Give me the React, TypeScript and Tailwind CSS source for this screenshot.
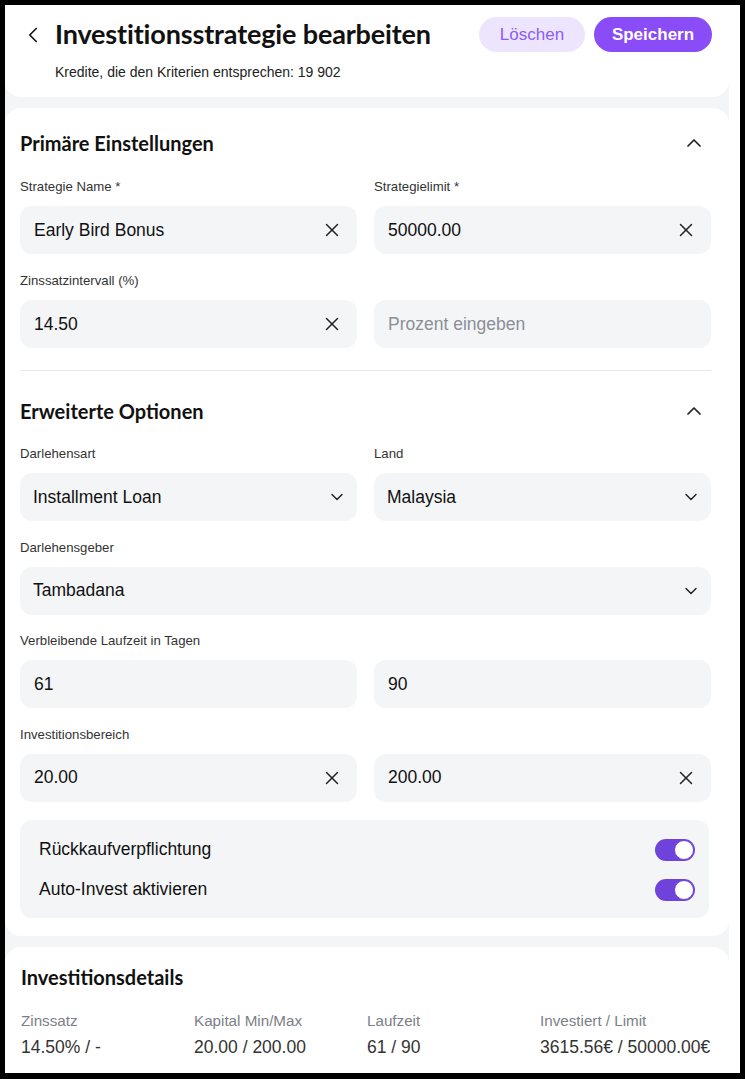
import { X, ChevronDown, ChevronUp, ChevronLeft } from "lucide-react";

const sans = "font-['Liberation_Sans',Arial,sans-serif]";
const heading = "font-['Lato','Noto_Sans',sans-serif]";

function Label({ text }: { text: string }) {
  return <div className="h-4 text-[13.2px] leading-4 text-[#333] mb-[11px]">{text}</div>;
}

function TextField({ value, placeholder, clear }: { value?: string; placeholder?: string; clear?: boolean }) {
  return (
    <div className="flex items-center h-12 rounded-xl bg-[#f4f5f7] pl-[14px] pr-[14px]">
      {value ? (
        <span className="flex-1 text-[17.5px] text-[#111]">{value}</span>
      ) : (
        <span className="flex-1 text-[17.5px] text-[#8a8f98]">{placeholder}</span>
      )}
      {clear && <X size={22} strokeWidth={1.6} className="text-[#222]" />}
    </div>
  );
}

function SelectField({ value }: { value: string }) {
  return (
    <div className="flex items-center h-12 rounded-xl bg-[#f4f5f7] pl-[13px] pr-[10px]">
      <span className="flex-1 text-[17.5px] text-[#111]">{value}</span>
      <ChevronDown size={20} strokeWidth={1.75} className="text-[#222]" />
    </div>
  );
}

function Field({ label, children }: { label?: string; children: React.ReactNode }) {
  return (
    <div>
      <Label text={label ?? ""} />
      {children}
    </div>
  );
}

function Toggle() {
  return (
    <div className="flex items-center justify-end w-10 h-[22px] rounded-full bg-[#6f42dc] p-px">
      <div className="w-5 h-5 rounded-full bg-white border border-[#6f42dc]" />
    </div>
  );
}

function SectionHeader({ title }: { title: string }) {
  return (
    <div className="flex items-center justify-between h-[26px]">
      <h2 className={`${heading} text-[20px] font-bold text-[#111]`}>{title}</h2>
      <ChevronUp size={24} strokeWidth={1.75} className="text-[#222] mr-[5px]" />
    </div>
  );
}

const details = [
  { label: "Zinssatz", value: "14.50% / -" },
  { label: "Kapital Min/Max", value: "20.00 / 200.00" },
  { label: "Laufzeit", value: "61 / 90" },
  { label: "Investiert / Limit", value: "3615.56€ / 50000.00€" },
];

export default function App() {
  return (
    <div className={`${sans} w-[745px] h-[1079px] bg-black pt-[5px] pl-[5px] pr-[5px] pb-[6px]`}>
      <div className="h-full bg-white overflow-hidden">
        <div className="w-[724px] h-full bg-[#f4f5f7] flex flex-col">
          {/* header */}
          <div className="bg-white rounded-b-2xl h-[92px] pl-[17px] pr-[17px] pt-3">
            <div className="flex items-center h-[35px]">
              <ChevronLeft size={26} strokeWidth={1.5} className="text-[#111] -ml-[2px]" />
              <h1 className={`${heading} ml-[9px] text-[27px] font-bold text-[#111] tracking-[-0.15px]`}>
                Investitionsstrategie bearbeiten
              </h1>
              <div className="ml-auto flex gap-[9px]">
                <button className="h-[35px] w-[106px] rounded-full bg-[#ede5fe] text-[17px] text-[#8b5cf6]">
                  Löschen
                </button>
                <button className="h-[35px] w-[118px] rounded-full bg-[#8a4cf7] text-[17px] text-white font-semibold">
                  Speichern
                </button>
              </div>
            </div>
            <p className="mt-[10px] ml-[33px] text-[14px] text-[#222]">
              Kredite, die den Kriterien entsprechen: 19 902
            </p>
          </div>

          {/* main card */}
          <div className="mt-[11px] bg-white rounded-2xl h-[828px] pl-[15px] pr-[18px] pt-[22px]">
            <SectionHeader title="Primäre Einstellungen" />
            <div className="mt-[23px] grid grid-cols-2 gap-x-[17px] gap-y-[19px]">
              <Field label="Strategie Name *">
                <TextField value="Early Bird Bonus" clear />
              </Field>
              <Field label="Strategielimit *">
                <TextField value="50000.00" clear />
              </Field>
              <Field label="Zinssatzintervall (%)">
                <TextField value="14.50" clear />
              </Field>
              <Field>
                <TextField placeholder="Prozent eingeben" />
              </Field>
            </div>
            <div className="mt-[22px] border-t border-[#e5e7eb]" />
            <div className="mt-[27px]">
              <SectionHeader title="Erweiterte Optionen" />
            </div>
            <div className="mt-[22px] grid grid-cols-2 gap-x-[17px] gap-y-[18.5px]">
              <Field label="Darlehensart">
                <SelectField value="Installment Loan" />
              </Field>
              <Field label="Land">
                <SelectField value="Malaysia" />
              </Field>
              <div className="col-span-2">
                <Field label="Darlehensgeber">
                  <SelectField value="Tambadana" />
                </Field>
              </div>
              <Field label="Verbleibende Laufzeit in Tagen">
                <TextField value="61" />
              </Field>
              <Field>
                <TextField value="90" />
              </Field>
              <Field label="Investitionsbereich">
                <TextField value="20.00" clear />
              </Field>
              <Field>
                <TextField value="200.00" clear />
              </Field>
            </div>
            <div className="mt-[18px] mr-[2px] h-[98px] rounded-xl bg-[#f4f5f7] pl-[19px] pr-[14px] pt-[19px] flex flex-col gap-[18px]">
              <div className="flex items-center justify-between h-[22px]">
                <span className="text-[17.5px] text-[#111]">Rückkaufverpflichtung</span>
                <Toggle />
              </div>
              <div className="flex items-center justify-between h-[22px]">
                <span className="text-[17.5px] text-[#111]">Auto-Invest aktivieren</span>
                <Toggle />
              </div>
            </div>
          </div>

          {/* details */}
          <div className="mt-[11px] bg-white rounded-t-2xl flex-1 pl-[16px] pt-[18px]">
            <h2 className={`${heading} text-[20px] font-bold text-[#111] h-6 leading-6`}>Investitionsdetails</h2>
            <div className="mt-[23px] grid grid-cols-[173px_173px_173px_1fr]">
              {details.map((d) => (
                <div key={d.label}>
                  <div className="text-[15.2px] text-[#7b7f87] leading-[18px]">{d.label}</div>
                  <div className="mt-[7px] text-[17.5px] text-[#333] leading-5">{d.value}</div>
                </div>
              ))}
            </div>
          </div>
        </div>
      </div>
    </div>
  );
}
